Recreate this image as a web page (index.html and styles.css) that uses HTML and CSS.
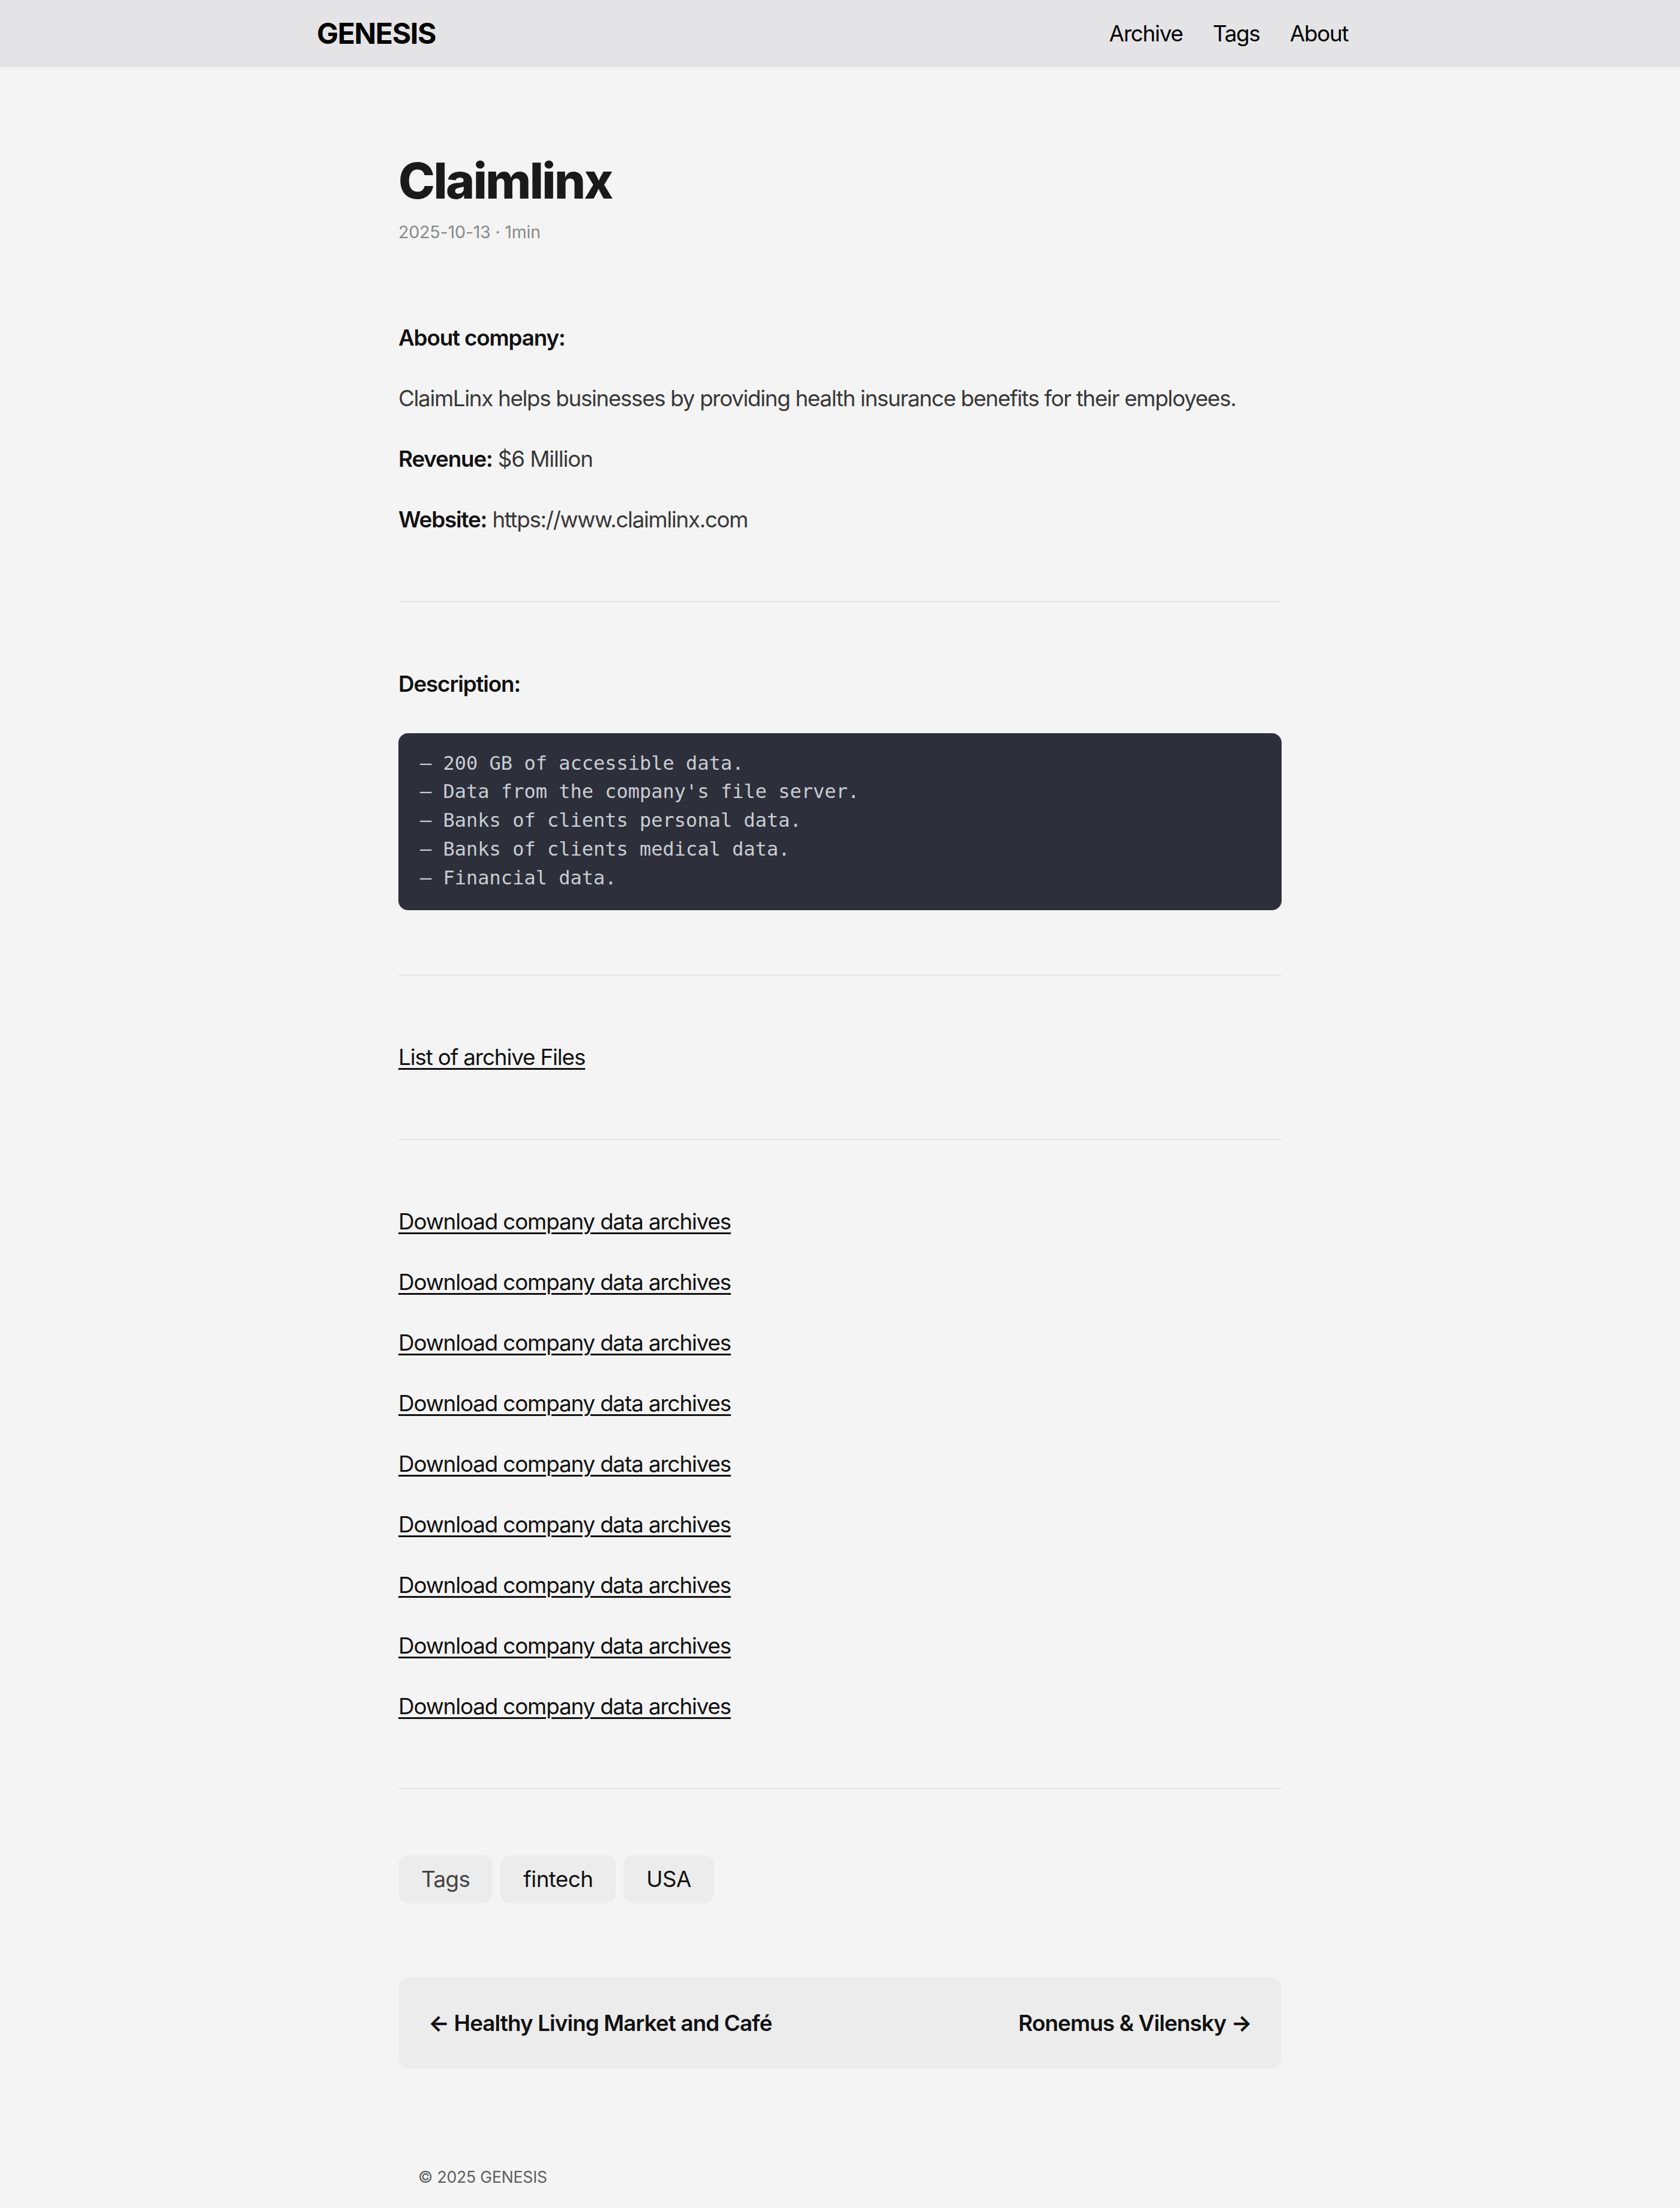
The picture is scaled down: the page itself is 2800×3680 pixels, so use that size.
FILE: index.html
```html
<!DOCTYPE html>
<html lang="en">
<head>
<meta charset="utf-8">
<title>Claimlinx | GENESIS</title>
<link rel="stylesheet" href="styles.css">
</head>
<body>
<header class="header">
  <nav class="nav">
    <a class="logo" href="#">GENESIS</a>
    <ul class="menu">
      <li><a href="#">Archive</a></li>
      <li><a href="#">Tags</a></li>
      <li><a href="#">About</a></li>
    </ul>
  </nav>
</header>
<main class="main">
  <article class="post">
    <header class="post-header">
      <h1 class="post-title">Claimlinx</h1>
      <div class="post-meta">2025-10-13&nbsp;·&nbsp;1min</div>
    </header>
    <div class="post-content">
      <p><strong>About company:</strong></p>
      <p class="lead">ClaimLinx helps businesses by providing health insurance benefits for their employees.</p>
      <p><strong>Revenue:</strong> $6 Million</p>
      <p><strong>Website:</strong> <span class="url">https://www.claimlinx.com</span></p>
      <hr>
      <p><strong>Description:</strong></p>
      <pre class="code"><code>– 200 GB of accessible data.
– Data from the company's file server.
– Banks of clients personal data.
– Banks of clients medical data.
– Financial data.</code></pre>
      <hr>
      <p><a href="#">List of archive Files</a></p>
      <hr>
      <p><a href="#">Download company data archives</a></p>
      <p><a href="#">Download company data archives</a></p>
      <p><a href="#">Download company data archives</a></p>
      <p><a href="#">Download company data archives</a></p>
      <p><a href="#">Download company data archives</a></p>
      <p><a href="#">Download company data archives</a></p>
      <p><a href="#">Download company data archives</a></p>
      <p><a href="#">Download company data archives</a></p>
      <p><a href="#">Download company data archives</a></p>
      <hr>
    </div>
    <footer class="post-footer">
      <ul class="post-tags">
        <li class="tag tag-label">Tags</li>
        <li class="tag"><a href="#">fintech</a></li>
        <li class="tag"><a href="#">USA</a></li>
      </ul>
      <nav class="paginav">
        <a class="prev" href="#"><span class="arrow">←</span> Healthy Living Market and Café</a>
        <a class="next" href="#">Ronemus &amp; Vilensky <span class="arrow">→</span></a>
      </nav>
    </footer>
  </article>
</main>
<footer class="footer">
  <span>© 2025 GENESIS</span>
</footer>
</body>
</html>
```
FILE: styles.css
```css
* {
  box-sizing: border-box;
}

html, body {
  margin: 0;
  padding: 0;
}

body {
  background: #f4f4f4;
  font-family: Inter, "Noto Sans", "Liberation Sans", sans-serif;
  color: #1e1e1e;
}

a {
  color: inherit;
  text-decoration: none;
}

ul {
  list-style: none;
  margin: 0;
  padding: 0;
}

.header {
  background: #e4e4e6;
  height: 112px;
}

.nav {
  max-width: 1744px;
  margin: 0 auto;
  padding-right: 25px;
  height: 112px;
  display: flex;
  align-items: center;
  justify-content: space-between;
}

.logo {
  font-size: 48px;
  font-weight: 700;
  color: #000;
  line-height: 112px;
  letter-spacing: -1.3px;
}

.menu {
  display: flex;
  gap: 50px;
  font-size: 36.8px;
  color: #000;
  line-height: 112px;
  letter-spacing: -1.3px;
}

.main {
  width: 1472px;
  margin: 0 auto;
  padding-top: 137px;
}

.post-title {
  margin: 0;
  font-size: 82px;
  line-height: 106.6px;
  font-weight: 800;
  color: #1a1a1a;
  letter-spacing: -2.6px;
}

.post-meta {
  margin-top: 11px;
  font-size: 28.6px;
  line-height: 40px;
  color: #8a8a8a;
  letter-spacing: -0.2px;
}

.post-content {
  margin-top: 126px;
  font-size: 36.8px;
  line-height: 59px;
  color: #383838;
  letter-spacing: -1.15px;
}

.post-content p {
  margin: 0 0 42px;
}

.post-content .lead,
.post-content .url {
  letter-spacing: -1.35px;
}

.post-content strong {
  color: #111;
  font-weight: 600;
}

.post-content a {
  color: #111;
  text-decoration: underline;
  text-decoration-thickness: 3px;
  text-underline-offset: 5px;
}

.post-content hr {
  border: 0;
  height: 2px;
  background: #e4e4e4;
  margin: 107px 0 106px;
}

.code {
  margin: 53px 0 0;
  background: #2d303a;
  border-radius: 16px;
  padding: 27px 36px 29px;
  font-family: "DejaVu Sans Mono", "Liberation Mono", monospace;
  font-size: 32px;
  line-height: 47.8px;
  color: #c9ccd4;
  letter-spacing: 0;
}

.code code {
  font-family: inherit;
}

.post-footer {
  padding-top: 4px;
}

.post-tags {
  display: flex;
  gap: 13px;
}

.tag {
  background: #ececec;
  border-radius: 16px;
  height: 80px;
  line-height: 80px;
  padding: 0 38px;
  font-size: 36.8px;
  color: #111;
  letter-spacing: -0.6px;
}

.tag-label {
  color: #444;
}

.paginav {
  margin-top: 124px;
  height: 151px;
  background: #ececec;
  border-radius: 16px;
  padding: 0 50px;
  display: flex;
  align-items: center;
  justify-content: space-between;
  font-size: 36.8px;
  font-weight: 600;
  color: #111;
  letter-spacing: -0.9px;
}

.arrow {
  font-weight: 700;
}

.footer {
  width: 1472px;
  margin: 157px auto 0;
  padding: 0 0 40px 33px;
  font-size: 26.6px;
  line-height: 49px;
  color: #5e5e5e;
  letter-spacing: -0.2px;
}
```
